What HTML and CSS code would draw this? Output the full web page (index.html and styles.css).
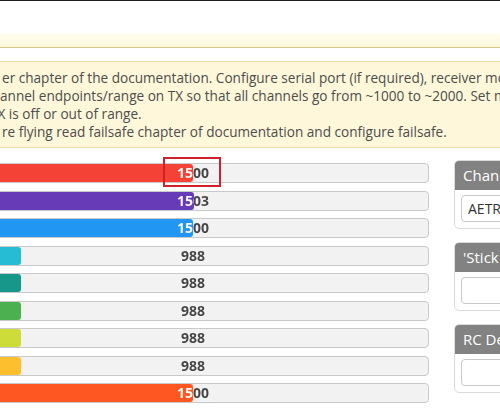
FILE: index.html
```html
<!DOCTYPE html>
<html lang="en">
<head>
  <meta charset="UTF-8">
  <title>Receiver</title>
  <meta name="viewport" content="width=device-width, initial-scale=1.0">
  <link rel="stylesheet" href="styles.css">
</head>
<body>
  <div class="topline"></div>
  <div class="header-space"></div>
  <div class="tab-band"></div>

  <div class="note">
    <p class="note-line l1">er chapter of the documentation. Configure serial port (if required), receiver mode</p>
    <p class="note-line l2">annel endpoints/range on TX so that all channels go from ~1000 to ~2000. Set midpoint</p>
    <p class="note-line l3">TX is off or out of range.</p>
    <p class="note-line l4">re flying read failsafe chapter of documentation and configure failsafe.</p>
  </div>

  <div class="receiver">
    <div class="bars">
      <div class="meter ch-roll" style="--p: 50%">
        <div class="fill"></div>
        <div class="label">1500</div>
        <div class="highlight"></div>
      </div>
      <div class="meter ch-pitch" style="--p: 50.21%">
        <div class="fill"></div>
        <div class="label">1503</div>
      </div>
      <div class="meter ch-yaw" style="--p: 50%">
        <div class="fill"></div>
        <div class="label">1500</div>
      </div>
      <div class="meter ch-throttle" style="--p: 13.43%">
        <div class="fill"></div>
        <div class="label">988</div>
      </div>
      <div class="meter ch-aux1" style="--p: 13.43%">
        <div class="fill"></div>
        <div class="label">988</div>
      </div>
      <div class="meter ch-aux2" style="--p: 13.43%">
        <div class="fill"></div>
        <div class="label">988</div>
      </div>
      <div class="meter ch-aux3" style="--p: 13.43%">
        <div class="fill"></div>
        <div class="label">988</div>
      </div>
      <div class="meter ch-aux4" style="--p: 13.43%">
        <div class="fill"></div>
        <div class="label">988</div>
      </div>
      <div class="meter ch-aux5" style="--p: 50%">
        <div class="fill"></div>
        <div class="label">1500</div>
      </div>
    </div>

    <div class="side">
      <div class="gui-box">
        <div class="gui-box-title">Channel Map</div>
        <input type="text" class="gui-input" value="AETR1234">
      </div>
      <div class="gui-box">
        <div class="gui-box-title">'Stick Low' Threshold</div>
        <input type="text" class="gui-input" value="">
      </div>
      <div class="gui-box">
        <div class="gui-box-title">RC Deadband</div>
        <input type="text" class="gui-input" value="">
      </div>
    </div>
  </div>
</body>
</html>
```

FILE: styles.css
```css
body {
  font-family: 'Open Sans', 'Noto Sans', sans-serif;
  background-color: white;
  color: #4d4d4d;
  margin: 0;
  width: 500px;
  height: 411px;
  overflow: hidden;
}

.topline {
  height: 1px;
  background-color: #1e1e1e;
}

.header-space {
  height: 32px;
}

.tab-band {
  height: 14px;
  background: linear-gradient(to bottom, #fffdf2, #fdf6d9);
  border-bottom: 1px solid #d6c78c;
}

.note {
  margin: 13px -10px 0 -10px;
  padding: 7px 0 6px 10px;
  background-color: #fef7da;
  border: 1px solid #eadda6;
  font-size: 13.6px;
  line-height: 18px;
}

.note-line {
  margin: 0;
  white-space: nowrap;
}

.l1 { margin-left: 1px; }
.l2 { margin-left: -1px; }
.l3 { margin-left: -11px; }
.l4 { margin-left: 1px; }

.receiver {
  display: flex;
  gap: 25px;
  margin-top: 12px;
}

.bars {
  flex: none;
  width: 472px;
  margin-left: -43px;
  padding-top: 3px;
  display: flex;
  flex-direction: column;
  gap: 7.5px;
}

.meter {
  position: relative;
  display: grid;
  height: 20px;
  box-sizing: border-box;
  border: 1px solid #c9c9c9;
  border-radius: 4px;
  background-color: #f2f2f2;
}

.fill {
  grid-area: 1 / 1;
  width: var(--p);
  border-radius: 3px;
}

.label {
  grid-area: 1 / 1;
  text-align: center;
  font-weight: bold;
  font-size: 14px;
  line-height: 18px;
  background: linear-gradient(90deg, #fff var(--p), #444 var(--p));
  -webkit-background-clip: text;
  background-clip: text;
  color: transparent;
}

.ch-roll .fill { background-color: #f44336; }
.ch-pitch .fill { background-color: #673ab7; }
.ch-yaw .fill { background-color: #2196f3; }
.ch-throttle .fill { background-color: #26bcd4; }
.ch-aux1 .fill { background-color: #17968a; }
.ch-aux2 .fill { background-color: #4caf50; }
.ch-aux3 .fill { background-color: #cddc39; }
.ch-aux4 .fill { background-color: #fdbf2d; }
.ch-aux5 .fill { background-color: #ff5722; }

/* annotation frame over the first value */
.highlight {
  position: absolute;
  left: 205px;
  top: -7px;
  width: 58px;
  height: 30px;
  box-sizing: border-box;
  border: 2px solid #d0202c;
}

.side {
  flex: none;
  width: 240px;
  display: flex;
  flex-direction: column;
  gap: 13px;
}

.gui-box {
  border: 1px solid #dadada;
  border-radius: 5px;
  background-color: white;
}

.gui-box-title {
  height: 29px;
  line-height: 29px;
  padding-left: 8px;
  background-color: #828282;
  color: white;
  font-size: 15px;
  border-radius: 4px 4px 0 0;
  white-space: nowrap;
}

.gui-input {
  display: block;
  margin: 5px 7px 6px 6px;
  width: 220px;
  height: 27px;
  box-sizing: border-box;
  border: 1px solid #c8c8c8;
  border-radius: 4px;
  padding: 0 6px;
  font-family: 'Open Sans', 'Noto Sans', sans-serif;
  font-size: 14px;
  color: #333;
}
```
